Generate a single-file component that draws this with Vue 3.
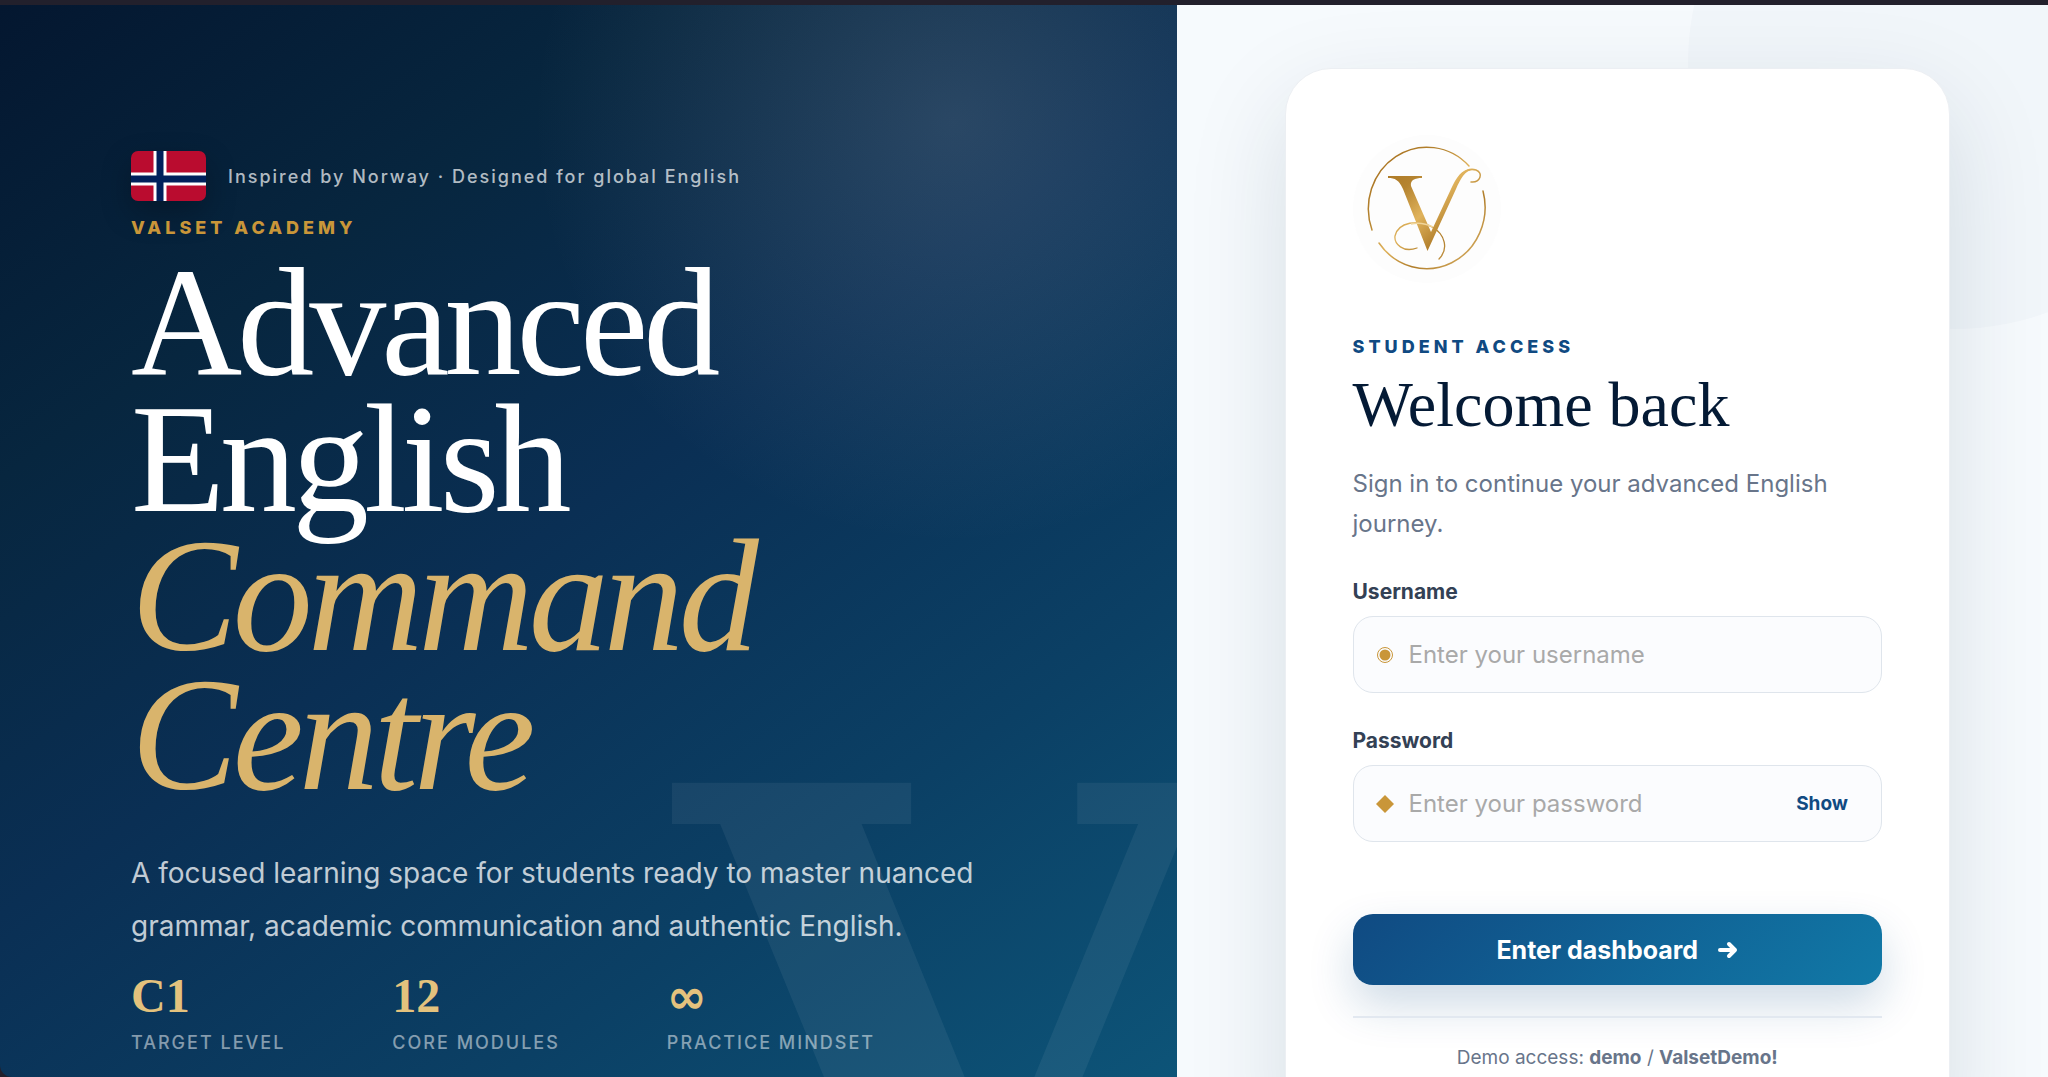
<script setup>
import { ref } from 'vue'

const username = ref('')
const password = ref('')
const visible = ref(false)

const stats = [
  { value: 'C1', label: 'Target level' },
  { value: '12', label: 'Core modules' },
  { value: '∞', label: 'Practice mindset', symbol: true },
]
</script>

<template>
  <div class="page">
    <section class="hero">
      <span class="watermark" aria-hidden="true">V</span>
      <div class="origin">
        <svg class="flag" viewBox="0 0 75 50" role="img" aria-label="Norwegian flag">
          <rect width="75" height="50" fill="#ba0c2f" />
          <path d="M29 0v50M0 28h75" stroke="#fff" stroke-width="13" />
          <path d="M29 0v50M0 28h75" stroke="#00205b" stroke-width="7" />
        </svg>
        <span>Inspired by Norway · Designed for global English</span>
      </div>
      <p class="eyebrow">VALSET ACADEMY</p>
      <h1>Advanced<br />English<br /><em>Command<br />Centre</em></h1>
      <p class="lead">A focused learning space for students ready to master nuanced grammar, academic communication and authentic English.</p>
      <dl class="stats">
        <div v-for="stat in stats" :key="stat.label">
          <dd :class="{ symbol: stat.symbol }">{{ stat.value }}</dd>
          <dt>{{ stat.label }}</dt>
        </div>
      </dl>
    </section>

    <main class="access">
      <form class="card" @submit.prevent>
        <svg class="logo" viewBox="0 0 148 148" role="img" aria-label="Valset Academy logo">
          <defs>
            <linearGradient id="gold" x1="20" y1="20" x2="128" y2="128" gradientUnits="userSpaceOnUse">
              <stop offset="0" stop-color="#a8711f" />
              <stop offset=".3" stop-color="#b58430" />
              <stop offset=".5" stop-color="#e0b35c" />
              <stop offset=".7" stop-color="#b07d2a" />
              <stop offset="1" stop-color="#dcb468" />
            </linearGradient>
          </defs>
          <circle cx="74" cy="74" r="74" fill="#fdfdfd" />
          <g fill="none" stroke="url(#gold)" stroke-linecap="round">
            <path d="M116 31A58.500 61.500 0 0 0 19 95" stroke-width="1.500" />
            <path d="M26 108A58.500 61.500 0 0 0 130 56" stroke-width="1.500" />
            <path d="M64 113C50 118 41 109 42 101C45 87 66 84 79 92C92 99 96 114 86 124" stroke-width="1.300" />
            <path d="M118 47C127 48 131 38 123 35C113 32 107 40 103 49" stroke-width="1.500" />
          </g>
          <path d="M35 41H69V43C62 43 57 45 58 51L78 97L98 54C104 41 110 33 120 34.500C112 35 107 45 103 54L74.500 116L50 54C46 45 42 43 35 43Z" fill="url(#gold)" />
          <path d="M58 89C66 87 72 88 80 92" fill="none" stroke="#f0d59b" stroke-width="1.500" />
        </svg>
        <p class="eyebrow blue">STUDENT ACCESS</p>
        <h2>Welcome back</h2>
        <p class="intro">Sign in to continue your advanced English journey.</p>

        <label for="username">Username</label>
        <div class="field">
          <svg class="mark" viewBox="0 0 18 18" aria-hidden="true">
            <circle cx="9" cy="9" r="7.500" fill="none" stroke="#c99639" />
            <circle cx="9" cy="9" r="5.500" fill="#c99639" />
          </svg>
          <input id="username" v-model="username" type="text" placeholder="Enter your username" />
        </div>

        <label for="password">Password</label>
        <div class="field">
          <svg class="mark" viewBox="0 0 18 18" aria-hidden="true">
            <path d="M9 0L18 9L9 18L0 9Z" fill="#c99639" />
          </svg>
          <input id="password" v-model="password" :type="visible ? 'text' : 'password'" placeholder="Enter your password" />
          <button class="reveal" type="button" @click="visible = !visible">{{ visible ? 'Hide' : 'Show' }}</button>
        </div>

        <button class="submit" type="submit">
          Enter dashboard
          <svg viewBox="0 0 20 18" aria-hidden="true">
            <path d="M2 9H17M11 3L17 9L11 15" fill="none" stroke="#fff" stroke-width="4" stroke-linecap="round" stroke-linejoin="round" />
          </svg>
        </button>
        <p class="demo">Demo access: <strong>demo</strong> / <strong>ValsetDemo!</strong></p>
      </form>
    </main>
  </div>
</template>

<style>
body {
  margin: 0;
  background: #22202c;
}
</style>

<style scoped>
.page {
  box-sizing: border-box;
  display: grid;
  grid-template-columns: 135fr 100fr;
  height: 100vh;
  overflow: hidden;
  border-top: 5px solid #22202c;
  font-family: Inter, sans-serif;
}
p, h1, h2, dl, dd { margin: 0; }
button, input { font: inherit; }

.hero {
  position: relative;
  overflow: hidden;
  padding: 146px 131px 0;
  border-bottom-left-radius: 12px;
  background:
    radial-gradient(circle at 81% 11%, rgba(190, 192, 202, .18), transparent 420px),
    linear-gradient(145deg, #041730 0%, #07263f 25%, #0a2f54 48%, #0b4065 75%, #0d5478 100%);
  color: #fff;
}
.hero > * { position: relative; }
.hero > .watermark {
  position: absolute;
  top: 692px;
  left: 676px;
  font: 700 700px/1 "DejaVu Serif", serif;
  color: rgba(255, 255, 255, .06);
}
.origin {
  display: flex;
  align-items: center;
  gap: 22px;
  font-size: 18px;
  font-weight: 500;
  letter-spacing: 2px;
  color: rgba(255, 255, 255, .7);
}
.flag {
  width: 75px;
  height: 50px;
  border-radius: 7px;
  box-shadow: 0 12px 30px rgba(0, 0, 0, .25);
}
.eyebrow {
  margin-top: 16px;
  font-size: 18px;
  line-height: 22px;
  font-weight: 800;
  letter-spacing: 4px;
  color: #c99639;
}
h1 {
  margin-top: 15px;
  font: 400 154px/137px "Liberation Serif", serif;
  letter-spacing: -5px;
}
h1 em {
  font-size: 160px;
  color: #d9b46c;
}
.lead {
  max-width: 900px;
  margin-top: 41px;
  font-size: 28px;
  line-height: 53px;
  color: rgba(255, 255, 255, .75);
}
.stats {
  display: flex;
  gap: 107px;
  margin-top: 17px;
}
.stats div {
  display: flex;
  flex-direction: column;
  gap: 10px;
}
.stats dd {
  font: 700 48px/52px "Liberation Serif", serif;
  color: #e4c27d;
}
.stats .symbol { font-family: "DejaVu Sans", sans-serif; }
.stats dt {
  font-size: 18px;
  line-height: 22px;
  font-weight: 500;
  letter-spacing: 2px;
  text-transform: uppercase;
  color: rgba(255, 255, 255, .5);
}

.access {
  position: relative;
  overflow: hidden;
  display: flex;
  justify-content: center;
  align-items: flex-start;
  padding: 63px 98px 0 108px;
  background: #f6fafd;
}
.access::before {
  content: "";
  position: absolute;
  top: -210px;
  right: -174px;
  width: 534px;
  height: 534px;
  border-radius: 50%;
  background: rgba(16, 74, 110, .02);
}
.card {
  position: relative;
  box-sizing: border-box;
  display: flex;
  flex-direction: column;
  width: 100%;
  padding: 66px 67px 90px;
  border: 1px solid #eceff3;
  border-radius: 46px;
  background: #fff;
  box-shadow: 0 34px 100px rgba(10, 40, 60, .13);
}
.logo {
  width: 148px;
  height: 148px;
}
.blue {
  margin-top: 53px;
  color: #104a82;
}
h2 {
  margin-top: 12px;
  font: 400 64px/70px "Liberation Serif", serif;
  color: #041a35;
}
.intro {
  margin: 24px 0 36px;
  font-size: 24px;
  line-height: 40px;
  color: #68758a;
}
label {
  margin-bottom: 12px;
  font-size: 21px;
  line-height: 24px;
  font-weight: 700;
  color: #334155;
}
.field {
  box-sizing: border-box;
  display: flex;
  align-items: center;
  gap: 15px;
  height: 77px;
  margin-bottom: 36px;
  padding: 0 33px 0 22px;
  border: 1px solid #dfe5ec;
  border-radius: 20px;
  background: #fbfcfe;
}
.mark {
  flex: none;
  width: 18px;
  height: 18px;
}
input {
  flex: 1;
  min-width: 0;
  padding: 0;
  border: 0;
  outline: 0;
  background: none;
  font-size: 24px;
  color: #041a35;
}
input::placeholder { color: #a9a9a9; }
.reveal {
  padding: 0;
  border: 0;
  background: none;
  font-size: 19px;
  font-weight: 700;
  color: #104a82;
}
.submit {
  display: flex;
  justify-content: center;
  align-items: center;
  gap: 20px;
  height: 71px;
  margin-top: 36px;
  border: 0;
  border-radius: 20px;
  background: linear-gradient(135deg, #104a82, #1179a7);
  box-shadow: 0 20px 45px rgba(16, 74, 130, .2);
  font-size: 25px;
  font-weight: 700;
  color: #fff;
}
.submit svg {
  width: 20px;
  height: 18px;
}
.demo {
  margin-top: 31px;
  padding-top: 28px;
  border-top: 2px solid #e2e8f0;
  font-size: 19px;
  line-height: 24px;
  text-align: center;
  color: #68758a;
}
</style>
